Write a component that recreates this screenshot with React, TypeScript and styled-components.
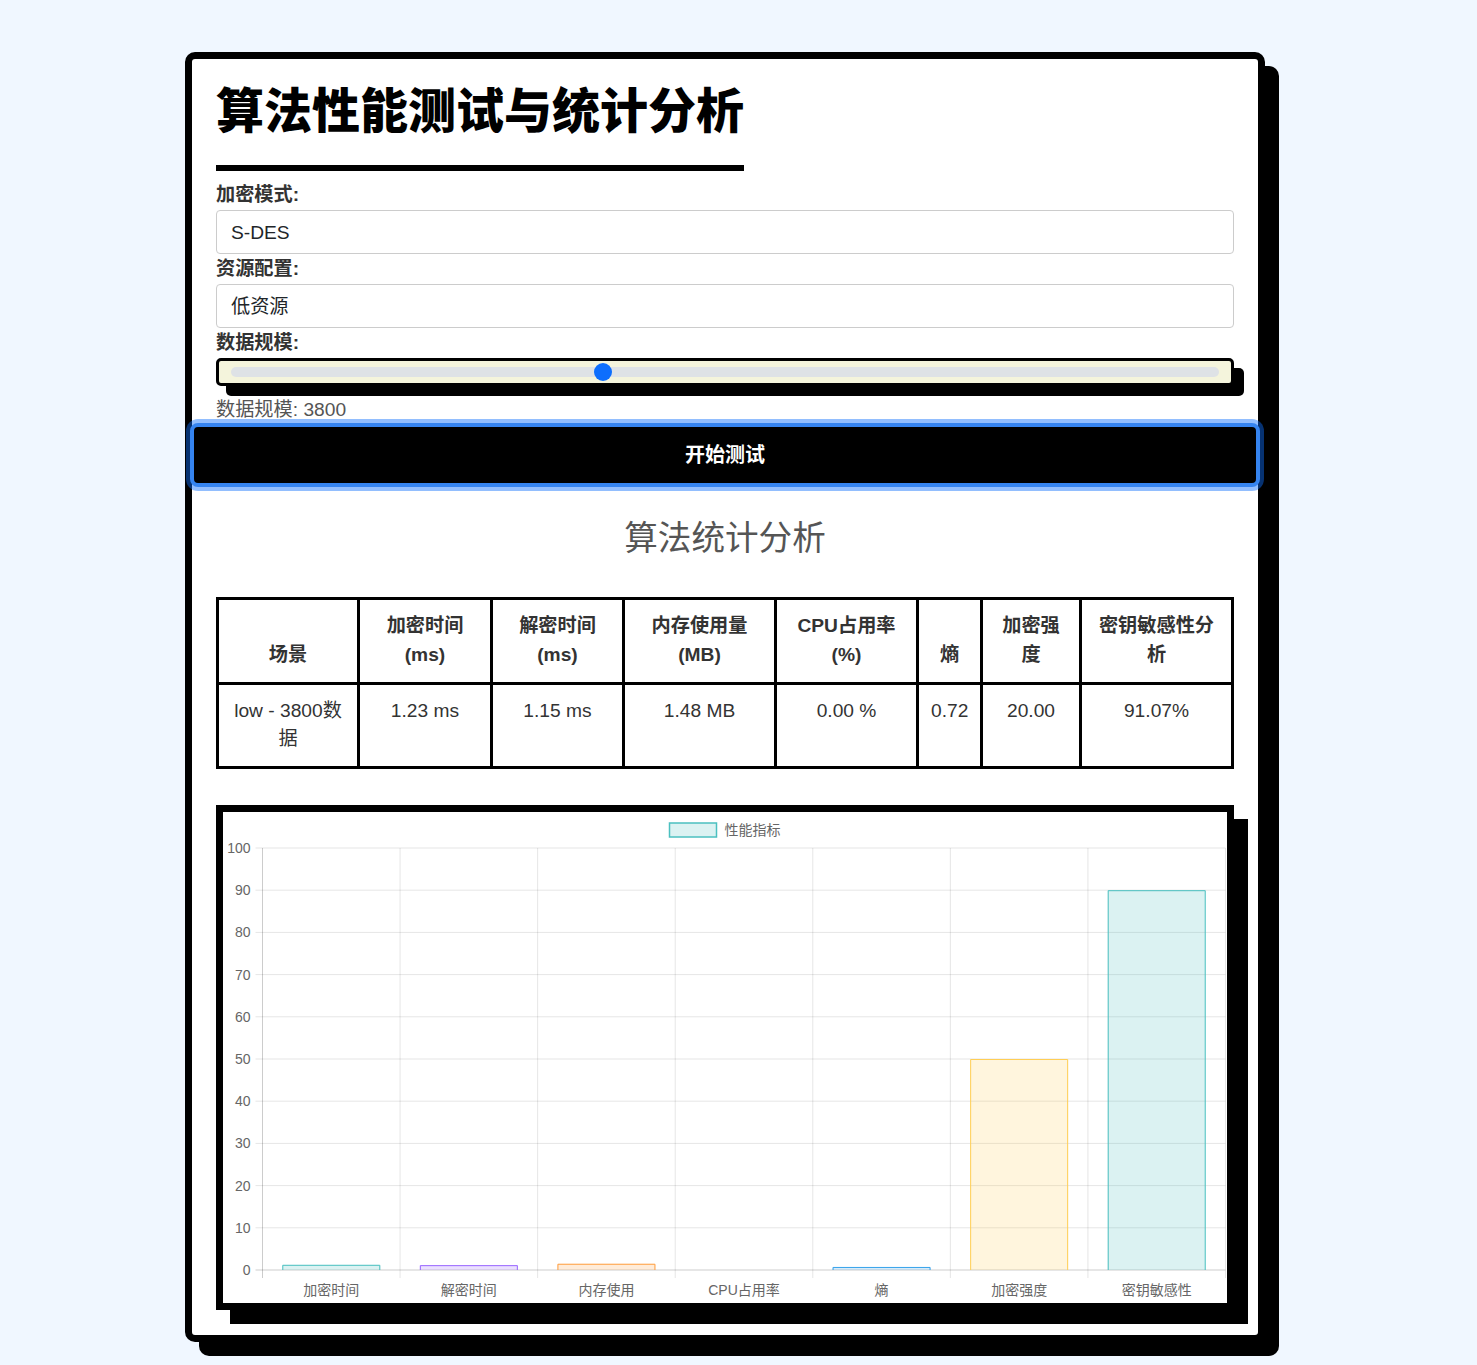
import { useState } from 'react'
import styled, { createGlobalStyle } from 'styled-components'

const GlobalStyle = createGlobalStyle`
  body {
    margin: 0;
    background: #f0f7ff;
    font-family: "Liberation Sans", "Noto Sans CJK SC", sans-serif;
    color: #333;
  }
`

const Page = styled.div`
  display: flex;
  justify-content: center;
  padding: 52px 27px 40px 0;
`

const Card = styled.main`
  width: 1080px;
  box-sizing: border-box;
  padding: 24px 24px 25px;
  background: #fff;
  border: 7px solid #000;
  border-radius: 10px;
  box-shadow: 14px 14px 0 #000;
`

const Title = styled.h1`
  width: fit-content;
  margin: 0 0 12px;
  padding-bottom: 25px;
  border-bottom: 6px solid #000;
  font-size: 48px;
  font-weight: 900;
  line-height: 57px;
  color: #000;
`

const Label = styled.label`
  display: block;
  margin: 3px 0;
  font-size: 19.2px;
  font-weight: 700;
  line-height: 24px;
  color: #333;
`

const Select = styled.select`
  display: block;
  width: 100%;
  height: 44px;
  box-sizing: border-box;
  padding: 0 14px;
  appearance: none;
  background: #fff;
  border: 1px solid #ccc;
  border-radius: 4px;
  font-family: inherit;
  font-size: 19.2px;
  color: #212529;
`

const Range = styled.input`
  display: block;
  width: 100%;
  height: 28px;
  box-sizing: border-box;
  margin: 0;
  padding: 0 12px;
  appearance: none;
  background: #f4f4dc;
  border: 3px solid #000;
  border-radius: 5px;
  box-shadow: 10px 10px 0 #000;

  &::-webkit-slider-runnable-track {
    height: 10px;
    background: #dee2e6;
    border-radius: 5px;
  }

  &::-webkit-slider-thumb {
    appearance: none;
    width: 18px;
    height: 18px;
    margin-top: -4px;
    border-radius: 50%;
    background: #0d6efd;
    border: none;
  }
`

const SizeValue = styled.div`
  margin-top: 12px;
  font-size: 19.2px;
  line-height: 24px;
  color: #555;
`

const StartButton = styled.button`
  display: block;
  width: calc(100% + 52px);
  height: 64px;
  margin: 1px -26px 0;
  background: #000;
  border: 4px solid #3584f0;
  border-radius: 8px;
  box-shadow: 0 0 0 4px rgba(13, 110, 253, 0.45);
  font-family: inherit;
  font-size: 20px;
  font-weight: 700;
  line-height: 1;
  color: #fff;
  cursor: pointer;
`

const SectionTitle = styled.h2`
  margin: 31px 0 38px;
  text-align: center;
  font-size: 33.6px;
  font-weight: 400;
  line-height: 41px;
  color: #555;
`

const Table = styled.table`
  width: calc(100% - 3px);
  table-layout: fixed;
  border-collapse: collapse;
  border: 3px solid #000;
  font-size: 19.2px;
  line-height: 28.8px;
  color: #333;
`

const Th = styled.th`
  padding: 12px;
  border: 3px solid #000;
  vertical-align: bottom;
  text-align: center;
  font-weight: 700;
`

const Td = styled.td`
  padding: 12px;
  border: 3px solid #000;
  vertical-align: top;
  text-align: center;
`

const ChartBox = styled.div`
  margin-top: 36px;
  background: #fff;
  border: 7px solid #000;
  box-shadow: 14px 14px 0 #000;

  svg {
    display: block;
    width: 100%;
    height: 491px;
  }
`

const columns = [
  { head: '场景', width: 141 },
  { head: '加密时间 (ms)', width: 133 },
  { head: '解密时间 (ms)', width: 132 },
  { head: '内存使用量 (MB)', width: 152 },
  { head: 'CPU占用率 (%)', width: 142 },
  { head: '熵', width: 64 },
  { head: '加密强度', width: 99 },
  { head: '密钥敏感性分析', width: 152 },
]

const row = ['low - 3800数据', '1.23 ms', '1.15 ms', '1.48 MB', '0.00 %', '0.72', '20.00', '91.07%']

const bars = [
  { label: '加密时间', value: 1.23, rgb: '75, 192, 192' },
  { label: '解密时间', value: 1.15, rgb: '153, 102, 255' },
  { label: '内存使用', value: 1.48, rgb: '255, 159, 64' },
  { label: 'CPU占用率', value: 0, rgb: '255, 99, 132' },
  { label: '熵', value: 0.72, rgb: '54, 162, 235' },
  { label: '加密强度', value: 50, rgb: '255, 206, 86' },
  { label: '密钥敏感性', value: 90, rgb: '75, 192, 192' },
]

const plot = { left: 39, right: 1002, top: 36, bottom: 458 }
const catW = (plot.right - plot.left) / bars.length
const barW = 98
const yFor = (v: number) => plot.bottom - (v / 100) * (plot.bottom - plot.top)
const ticks = [0, 10, 20, 30, 40, 50, 60, 70, 80, 90, 100]
const chartFont = '"Liberation Sans", "Noto Sans CJK SC", sans-serif'

function BarChart() {
  return (
    <svg viewBox="0 0 1003 491" fontFamily={chartFont}>
      <rect x={446} y={11} width={47} height={14} fill="rgba(75, 192, 192, 0.2)" stroke="rgb(75, 192, 192)" strokeWidth={1.5} />
      <text x={501} y={18} dominantBaseline="central" fontSize={14} fill="#666">性能指标</text>

      {ticks.map(t => (
        <g key={t}>
          <line x1={plot.left - 7} x2={plot.right} y1={yFor(t)} y2={yFor(t)} stroke={t === 0 ? 'rgba(0,0,0,0.2)' : 'rgba(0,0,0,0.1)'} />
          <text x={27} y={yFor(t)} textAnchor="end" dominantBaseline="central" fontSize={14} fill="#666">{t}</text>
        </g>
      ))}

      {bars.map((_, i) => (
        <line
          key={i}
          x1={plot.left + i * catW}
          x2={plot.left + i * catW}
          y1={plot.top}
          y2={plot.bottom + 8}
          stroke={i === 0 ? 'rgba(0,0,0,0.2)' : 'rgba(0,0,0,0.1)'}
        />
      ))}
      <line x1={plot.right} x2={plot.right} y1={plot.top} y2={plot.bottom + 8} stroke="rgba(0,0,0,0.1)" />

      {bars.map((b, i) => {
        const x = plot.left + i * catW + (catW - barW) / 2
        const y = yFor(b.value)
        if (b.value <= 0) return null
        return (
          <g key={b.label}>
            <rect x={x} y={y} width={barW} height={plot.bottom - y} fill={`rgba(${b.rgb}, 0.2)`} />
            <path
              d={`M${x + 0.5} ${plot.bottom} V${y + 0.5} H${x + barW - 0.5} V${plot.bottom}`}
              fill="none"
              stroke={`rgb(${b.rgb})`}
              strokeWidth={1}
            />
          </g>
        )
      })}

      {bars.map((b, i) => (
        <text
          key={b.label}
          x={plot.left + i * catW + catW / 2}
          y={478}
          textAnchor="middle"
          dominantBaseline="central"
          fontSize={14}
          fill="#666"
        >
          {b.label}
        </text>
      ))}
    </svg>
  )
}

export default function App() {
  const [size, setSize] = useState(3800)

  return (
    <>
      <GlobalStyle />
      <Page>
        <Card>
          <Title>算法性能测试与统计分析</Title>

          <Label htmlFor="mode">加密模式:</Label>
          <Select id="mode" defaultValue="S-DES">
            <option>S-DES</option>
            <option>AES</option>
            <option>DES</option>
          </Select>

          <Label htmlFor="resource">资源配置:</Label>
          <Select id="resource" defaultValue="低资源">
            <option>低资源</option>
            <option>中资源</option>
            <option>高资源</option>
          </Select>

          <Label htmlFor="size">数据规模:</Label>
          <Range
            id="size"
            type="range"
            min={100}
            max={10000}
            step={100}
            value={size}
            onChange={e => setSize(Number(e.target.value))}
          />
          <SizeValue>数据规模: {size}</SizeValue>

          <StartButton>开始测试</StartButton>

          <SectionTitle>算法统计分析</SectionTitle>

          <Table>
            <colgroup>
              {columns.map(c => (
                <col key={c.head} style={{ width: c.width }} />
              ))}
            </colgroup>
            <thead>
              <tr>
                {columns.map(c => (
                  <Th key={c.head}>{c.head}</Th>
                ))}
              </tr>
            </thead>
            <tbody>
              <tr>
                {row.map((v, i) => (
                  <Td key={i}>{v}</Td>
                ))}
              </tr>
            </tbody>
          </Table>

          <ChartBox>
            <BarChart />
          </ChartBox>
        </Card>
      </Page>
    </>
  )
}
